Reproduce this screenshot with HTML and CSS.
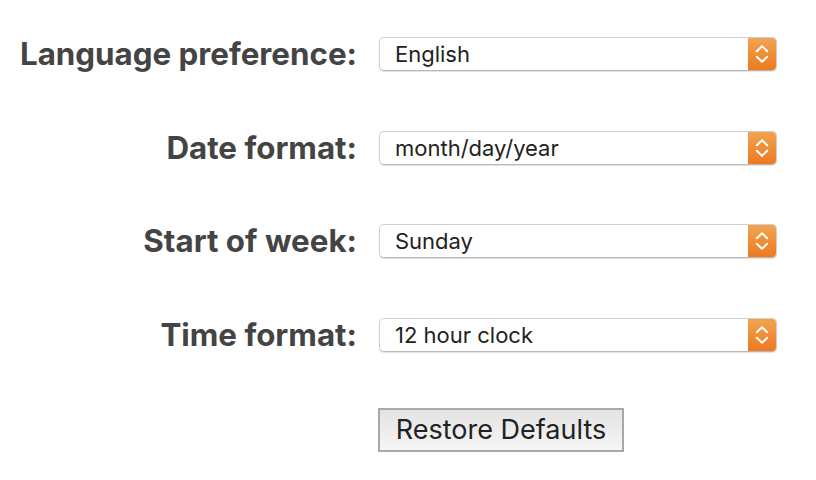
FILE: index.html
```html
<!DOCTYPE html>
<html lang="en">
  <head>
    <title>Preferences</title>
    <meta charset="utf-8" />
    <link rel="stylesheet" href="styles.css">
  </head>
  <body>
    <form class="prefs" action="#">
      <label class="prefs-label">Language preference:</label>
      <div class="popup">
        <span class="popup-value">English</span>
        <span class="popup-arrows"><svg width="14" height="20" viewBox="0 0 14 20"><path d="M1.8 7.2 L7 2.2 L12.2 7.2 M1.8 12.8 L7 17.8 L12.2 12.8" fill="none" stroke="#fff" stroke-width="2" stroke-linecap="round" stroke-linejoin="round"/></svg></span>
      </div>

      <label class="prefs-label">Date format:</label>
      <div class="popup">
        <span class="popup-value">month/day/year</span>
        <span class="popup-arrows"><svg width="14" height="20" viewBox="0 0 14 20"><path d="M1.8 7.2 L7 2.2 L12.2 7.2 M1.8 12.8 L7 17.8 L12.2 12.8" fill="none" stroke="#fff" stroke-width="2" stroke-linecap="round" stroke-linejoin="round"/></svg></span>
      </div>

      <label class="prefs-label">Start of week:</label>
      <div class="popup">
        <span class="popup-value">Sunday</span>
        <span class="popup-arrows"><svg width="14" height="20" viewBox="0 0 14 20"><path d="M1.8 7.2 L7 2.2 L12.2 7.2 M1.8 12.8 L7 17.8 L12.2 12.8" fill="none" stroke="#fff" stroke-width="2" stroke-linecap="round" stroke-linejoin="round"/></svg></span>
      </div>

      <label class="prefs-label">Time format:</label>
      <div class="popup">
        <span class="popup-value">12 hour clock</span>
        <span class="popup-arrows"><svg width="14" height="20" viewBox="0 0 14 20"><path d="M1.8 7.2 L7 2.2 L12.2 7.2 M1.8 12.8 L7 17.8 L12.2 12.8" fill="none" stroke="#fff" stroke-width="2" stroke-linecap="round" stroke-linejoin="round"/></svg></span>
      </div>

      <span></span>
      <div class="actions">
        <button type="button" class="restore">Restore Defaults</button>
      </div>
    </form>
  </body>
</html>
```

FILE: styles.css
```css
body {
  margin: 0;
  background: #fff;
  font-family: Inter, "Liberation Sans", sans-serif;
}

.prefs {
  display: grid;
  grid-template-columns: 357px 398px;
  grid-template-rows: repeat(4, 34px) 44px;
  column-gap: 22px;
  row-gap: 59.67px;
  padding-top: 37px;
}

.prefs-label {
  font-size: 31.3px;
  font-weight: 700;
  color: #444;
  text-align: right;
  line-height: 34px;
  white-space: nowrap;
}

.popup {
  display: flex;
  align-items: stretch;
  box-sizing: border-box;
  border: 1px solid #d0d0d0;
  border-bottom-color: #b8b8b8;
  border-radius: 5px;
  background: #fff;
  box-shadow: 0 1px 1px rgba(0, 0, 0, 0.12);
  overflow: hidden;
}

.popup-value {
  flex: 1;
  padding-left: 15px;
  font-size: 22px;
  line-height: 33px;
  color: #222;
}

.popup-arrows {
  width: 28px;
  display: flex;
  align-items: center;
  justify-content: center;
  background: linear-gradient(#f1a451, #ec7a1f);
}

.actions {
  margin-left: -1px;
  margin-top: -4px;
}

.restore {
  display: block;
  width: 246px;
  height: 44px;
  box-sizing: border-box;
  border: 2px solid #a8a8a8;
  border-radius: 0;
  background: linear-gradient(#e3e3e3, #f6f6f6);
  font-family: Inter, "Liberation Sans", sans-serif;
  font-size: 27px;
  line-height: 40px;
  color: #222;
  padding: 0;
}
```
